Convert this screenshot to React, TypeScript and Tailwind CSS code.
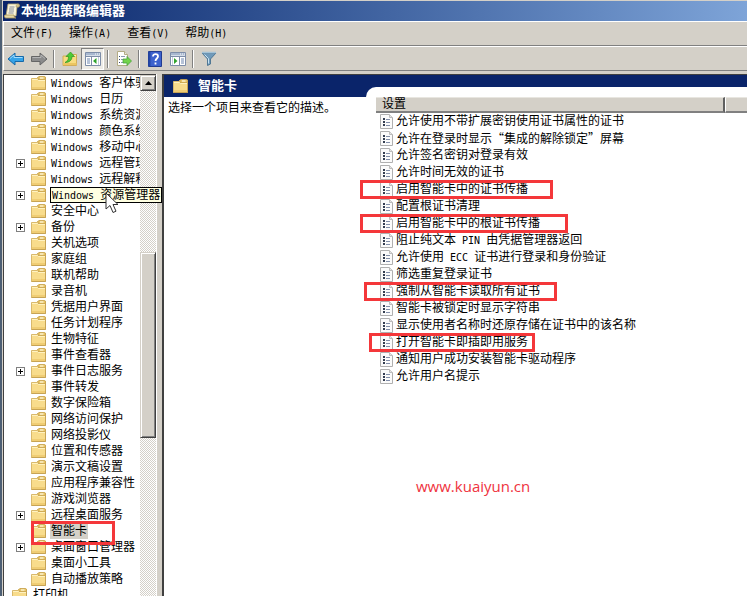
import React from 'react';

type TreeItem = {
  label: string;
  expandable?: boolean;
  selected?: boolean;
  tooltip?: boolean;
};

type Setting = {
  label: string;
  box?: string;
};

const menus = ['文件(F)', '操作(A)', '查看(V)', '帮助(H)'];

const treeItems: TreeItem[] = [
  { label: 'Windows 客户体验改善计划' },
  { label: 'Windows 日历' },
  { label: 'Windows 系统资源管理器' },
  { label: 'Windows 颜色系统' },
  { label: 'Windows 移动中心' },
  { label: 'Windows 远程管理', expandable: true },
  { label: 'Windows 远程解释' },
  { label: 'Windows 资源管理器', expandable: true, tooltip: true },
  { label: '安全中心' },
  { label: '备份', expandable: true },
  { label: '关机选项' },
  { label: '家庭组' },
  { label: '联机帮助' },
  { label: '录音机' },
  { label: '凭据用户界面' },
  { label: '任务计划程序' },
  { label: '生物特征' },
  { label: '事件查看器' },
  { label: '事件日志服务', expandable: true },
  { label: '事件转发' },
  { label: '数字保险箱' },
  { label: '网络访问保护' },
  { label: '网络投影仪' },
  { label: '位置和传感器' },
  { label: '演示文稿设置' },
  { label: '应用程序兼容性' },
  { label: '游戏浏览器' },
  { label: '远程桌面服务', expandable: true },
  { label: '智能卡', selected: true },
  { label: '桌面窗口管理器', expandable: true },
  { label: '桌面小工具' },
  { label: '自动播放策略' },
];

const settings: Setting[] = [
  { label: '允许使用不带扩展密钥使用证书属性的证书' },
  { label: '允许在登录时显示“集成的解除锁定”屏幕' },
  { label: '允许签名密钥对登录有效' },
  { label: '允许时间无效的证书' },
  { label: '启用智能卡中的证书传播', box: '-left-4 w-[193px]' },
  { label: '配置根证书清理' },
  { label: '启用智能卡中的根证书传播', box: '-left-4 w-52' },
  { label: '阻止纯文本 PIN 由凭据管理器返回' },
  { label: '允许使用 ECC 证书进行登录和身份验证' },
  { label: '筛选重复登录证书' },
  { label: '强制从智能卡读取所有证书', box: '-left-3 w-[193px]' },
  { label: '智能卡被锁定时显示字符串' },
  { label: '显示使用者名称时还原存储在证书中的该名称' },
  { label: '打开智能卡即插即用服务', box: '-left-[7px] w-[166px]' },
  { label: '通知用户成功安装智能卡驱动程序' },
  { label: '允许用户名提示' },
];

// Latin runs are set smaller so that one letter is half as wide as one Chinese character
const MixedText = ({ text }: { text: string }) => (
  <>
    {text.split(/([ -~]+)/).map((part, index) =>
      /^[ -~]+$/.test(part) ? (
        <span key={index} className="text-[10px] whitespace-pre font-['DejaVu_Sans_Mono',monospace]">{part}</span>
      ) : (
        <span key={index} className={part.includes('“') ? "font-['Noto_Sans_CJK_SC',sans-serif]" : ''}>{part}</span>
      )
    )}
  </>
);

const FolderIcon = () => (
  <svg viewBox="0 0 15 14" className="w-[15px] h-[14px] shrink-0" aria-hidden="true">
    <path d="M.5 2.500h5.500l1-1.500h7.500v12.500H.5z" fill="#f8dc8c" stroke="#d9b96c" strokeWidth="1" />
    <path d="M7 3.500V1.500l1-1h5.500l1 1v2z" fill="#e9c565" stroke="#c29c48" strokeWidth=".7" />
    <path d="M9 2h3.500" stroke="#fffbe6" strokeWidth="1.200" />
    <path d="M1 3.500h5.500l1 1H14" fill="none" stroke="#fff2c0" strokeWidth="1" />
    <path d="M1 11h13v2.500H1z" fill="#f0cd74" />
    <path d="M.5 13.500h14V4" fill="none" stroke="#c7a455" strokeWidth="1" />
  </svg>
);

const SettingIcon = () => (
  <svg viewBox="0 0 13 15" className="w-[13px] h-[15px] shrink-0" aria-hidden="true">
    <path d="M.5.5h9l3 3v11H.5z" fill="#fbfbfb" stroke="#b0b0b0" />
    <path d="M9.5.5v3h3" fill="#e4e4e4" stroke="#bdbdbd" />
    <path d="M3 4h2v2H3zM3 7h2v2H3zM3 10h2v2H3z" fill="#333d50" />
    <path d="M6 5.500h4M6 8.500h4M6 11.500h4" stroke="#8390ab" />
  </svg>
);

const ScrollIcon = () => (
  <svg viewBox="0 0 16 16" className="size-4 shrink-0" aria-hidden="true">
    <path d="M4 1h10c2 0 2 3 0 3h-1l-1 9H2L4 1z" fill="#fbf5d8" stroke="#b8a876" strokeWidth=".8" />
    <path d="M12 4c0-2 1-3 2-3s2 3 0 3z" fill="#d8c890" stroke="#a8965c" strokeWidth=".6" />
    <path d="M1 12h9c0 2 1 3 2 3H2c-2 0-2-3-1-3z" fill="#e6d9a6" stroke="#a8965c" strokeWidth=".8" />
    <path d="M5.500 4h5M5 6h5M5 8h5M4.500 10h5" stroke="#77819a" strokeWidth=".9" />
  </svg>
);

const BackIcon = () => (
  <svg viewBox="0 0 18 14" className="w-[18px] h-[14px]" aria-hidden="true">
    <path d="M1 7l7-6v3.500h8.500v5H8V13z" fill="#35a3e8" stroke="#1769a9" strokeLinejoin="round" />
    <path d="M3 6.500l4-3.500v2.500h8.500" fill="none" stroke="#9fdcff" />
  </svg>
);

const ForwardIcon = () => (
  <svg viewBox="0 0 18 14" className="w-[18px] h-[14px]" aria-hidden="true">
    <path d="M17 7l-7-6v3.500H1.500v5H10V13z" fill="#8b8b8b" stroke="#666" strokeLinejoin="round" />
    <path d="M2.500 5.500H11V3l4 3.500" fill="none" stroke="#b5b5b5" />
  </svg>
);

const UpFolderIcon = () => (
  <svg viewBox="0 0 16 16" className="size-4" aria-hidden="true">
    <path d="M1 5h5l1-1.500h7.500V14.500H1z" fill="#f8dc80" stroke="#cfa850" strokeWidth=".9" />
    <path d="M10 4.500h4" stroke="#fff3bd" />
    <path d="M1.500 13h13" stroke="#ecc661" strokeWidth="2" />
    <path d="M3 11.500c3-1.500 3.500-3.500 3.500-6H4L8.500 1l4 4.500H10c0 4-3 6-7 6z" fill="#4dcb35" stroke="#2f9323" strokeWidth=".7" />
  </svg>
);

const TreePaneIcon = () => (
  <svg viewBox="0 0 16 14" className="w-4 h-[14px]" aria-hidden="true">
    <path d="M.5.5h15v13H.5z" fill="#fff" stroke="#7d8da8" />
    <path d="M1 1h14v2.500H1z" fill="#a8b8d0" />
    <path d="M10 2h1M12 2h1M14 2h1" stroke="#fff" />
    <path d="M1 4.500h14M6.500 5v8.500" stroke="#7d8da8" />
    <path d="M2 7h3M2 9h3M2 11h3" stroke="#6d86b0" />
    <path d="M11.500 6v6L8 9z" fill="#2fa32c" />
    <path d="M13.500 5v8" stroke="#c4cedd" />
  </svg>
);

const ExportIcon = () => (
  <svg viewBox="0 0 16 16" className="size-4" aria-hidden="true">
    <path d="M1.500.5h7l3 3v11h-10z" fill="#fff" stroke="#b3ab84" />
    <path d="M8.500.5v3h3" fill="#e8e8de" stroke="#b3ab84" />
    <path d="M3 5.500h1M3 8.500h1M3 11.500h1" stroke="#394b70" />
    <path d="M5 5.500h4M5 8.500h3M5 11.500h3" stroke="#8c99b1" />
    <path d="M7 8h4V5.500L15.500 10 11 14.500V12H7z" fill="#73d34b" stroke="#4aa33c" strokeWidth=".8" />
  </svg>
);

const HelpIcon = () => (
  <svg viewBox="0 0 14 16" className="w-[14px] h-4" aria-hidden="true">
    <path d="M.5.500h13v15H.5z" fill="#3d62cd" stroke="#223c91" />
    <path d="M1.500 1v14" stroke="#2346a8" strokeWidth="2" />
    <path d="M5 5.500c0-3.500 5-3 5-.2C10 7.500 7.500 7.500 7.500 10M7.500 11.500v2" fill="none" stroke="#fff" strokeWidth="1.800" />
  </svg>
);

const ActionPaneIcon = () => (
  <svg viewBox="0 0 16 14" className="w-4 h-[14px]" aria-hidden="true">
    <path d="M.5.5h15v13H.5z" fill="#fff" stroke="#7d8da8" />
    <path d="M1 1h14v2.500H1z" fill="#a8b8d0" />
    <path d="M10 2h1M12 2h1M14 2h1" stroke="#fff" />
    <path d="M1 4.500h14M9.500 5v8.500" stroke="#7d8da8" />
    <path d="M11 7h3M11 9h3M11 11h3" stroke="#6d86b0" />
    <path d="M4 6v6l3.500-3z" fill="#2fa32c" />
    <path d="M2.500 5v8" stroke="#c4cedd" />
  </svg>
);

const FilterIcon = () => (
  <svg viewBox="0 0 16 15" className="w-4 h-[15px]" aria-hidden="true">
    <path d="M1 2h14L9.500 8v5l-3 1.500V8z" fill="#6f9abb" stroke="#48718f" strokeWidth=".9" />
    <path d="M3.500 3.500l4 4v5" fill="none" stroke="#c9e3f3" />
    <path d="M1 1.500h14" stroke="#a3c2d7" strokeWidth="1.500" />
  </svg>
);

const CursorIcon = () => (
  <svg viewBox="0 0 14 22" className="absolute left-[54px] top-1 z-20 w-[14px] h-[22px]" aria-hidden="true">
    <path d="M1 1v16l4-3.500 3 7 3-1.300-3-6.700h5z" fill="#fff" stroke="#333" />
  </svg>
);

const Separator = () => <div className="w-[2px] h-[18px] mx-[3px] border-l border-[#808080] bg-white" />;

const ToolButton = ({ label, pressed, children }: { label: string; pressed?: boolean; children: React.ReactNode }) => (
  <button
    aria-label={label}
    className={`flex items-center justify-center w-[23px] h-[22px] ${pressed ? 'border border-[#808080] border-r-white border-b-white bg-[#edebe6]' : ''}`}
  >
    {children}
  </button>
);

const TreeRow = ({ item }: { item: TreeItem }) => (
  <li className="relative flex items-center h-4 pl-3 whitespace-nowrap">
    {item.expandable ? (
      <button aria-label="+" className="flex items-center justify-center size-[9px] mr-[6px] shrink-0 border border-[#808080] bg-white">
        <svg viewBox="0 0 5 5" className="size-[5px]" aria-hidden="true">
          <path d="M0 2.500h5M2.500 0v5" stroke="#000" />
        </svg>
      </button>
    ) : (
      <span className="w-[9px] mr-[6px] shrink-0" />
    )}
    <FolderIcon />
    {item.tooltip ? (
      <div className="absolute left-[46px] top-0 z-10 h-4 px-px border border-black bg-[#ffffe1] leading-[14px]">
        <MixedText text={item.label} />
        <CursorIcon />
      </div>
    ) : (
      <span className={`min-w-0 overflow-hidden ml-1 px-px leading-4 ${item.selected ? 'bg-[#d4d0c8]' : ''}`}>
        <MixedText text={item.label} />
      </span>
    )}
    {item.selected && <div className="absolute left-[27px] -top-[2px] z-10 w-[84px] h-6 border-3 border-[#f4373a]" />}
  </li>
);

const TreePane = () => (
  <nav className="flex w-[137px] shrink-0 border-t border-l border-[#404040] bg-white">
    <ul className="flex-1 min-w-0">
      {treeItems.map((item) => (
        <TreeRow key={item.label} item={item} />
      ))}
      <li className="flex items-center h-4 pl-2 gap-[6px]">
        <FolderIcon />
        打印机
      </li>
    </ul>
  </nav>
);

const ScrollBar = () => (
  <div className="flex flex-col w-4 shrink-0 border-t border-[#404040] bg-[repeating-conic-gradient(#d4d0c8_0_25%,#fff_0_50%)] bg-[length:2px_2px]">
    <button aria-label="▲" className="flex items-center justify-center h-4 shrink-0 border border-[#d4d0c8] border-r-[#404040] border-b-[#404040] bg-[#d4d0c8] shadow-[inset_1px_1px_#fff,inset_-1px_-1px_#808080]">
      <svg viewBox="0 0 7 4" className="w-[7px] h-1" aria-hidden="true">
        <path d="M3.500 0L7 4H0z" fill="#000" />
      </svg>
    </button>
    <div className="basis-[161px] shrink-0" />
    <div className="basis-[186px] shrink-0 border border-[#d4d0c8] border-r-[#404040] border-b-[#404040] bg-[#d4d0c8] shadow-[inset_1px_1px_#fff,inset_-1px_-1px_#808080]" />
  </div>
);

const SettingsTable = () => (
  <table className="w-full border-separate border-spacing-0 text-left">
    <thead>
      <tr className="bg-[#d4d0c8]">
        <th className="h-4 p-0 pl-[6px] font-normal leading-[13px] border-t border-t-[#e8e6e0] border-b-2 border-b-[#808080] border-r-2 border-r-[#606060]">设置</th>
        <th className="w-[22px] p-0 border-t border-t-[#e8e6e0] border-b-2 border-b-[#808080] border-l border-l-white" aria-label="状态" />
      </tr>
    </thead>
    <tbody>
      {settings.map((setting) => (
        <tr key={setting.label}>
          <td className="p-0" colSpan={2}>
            <div className="relative flex items-center gap-[3px] h-[17px] pl-1 leading-[17px] whitespace-nowrap">
              <SettingIcon />
              <span><MixedText text={setting.label} /></span>
              {setting.box && <div className={`absolute -top-px z-10 h-[19px] border-3 border-[#f4373a] ${setting.box}`} />}
            </div>
          </td>
        </tr>
      ))}
    </tbody>
  </table>
);

const DetailPane = () => (
  <main className="flex flex-col flex-1 min-w-0 border-t border-l-2 border-[#404040] bg-white">
    <div className="flex flex-1 bg-[linear-gradient(#0a246a_22px,#fff_22px)]">
      <section className="w-[202px] shrink-0">
        <header className="flex items-center gap-[10px] h-[22px] pl-[9px] text-white">
          <FolderIcon />
          <h2 className="text-[13px] leading-[22px] font-bold">智能卡</h2>
        </header>
        <p className="px-1 pt-[2px] leading-[18px]">选择一个项目来查看它的描述。</p>
      </section>
      <section className="flex flex-col flex-1 min-w-0 mt-3 pl-[10px] pt-[10px] rounded-tl-[10px] bg-white">
        <SettingsTable />
        <p className="mt-[91px] ml-10 text-[15px] leading-5 text-[#ef3340] font-['Open_Sans',sans-serif]">www.kuaiyun.cn</p>
      </section>
    </div>
  </main>
);

export default function App() {
  return (
    <div className="flex flex-col h-screen overflow-hidden border-l-2 border-[#4d5f74] bg-[#d4d0c8] text-black text-xs font-['Liberation_Sans','Noto_Sans_CJK_SC',sans-serif]">
      <header className="flex items-center gap-px h-[21px] shrink-0 pl-px border-t border-l border-[#d4d0c8] bg-linear-to-r from-[#0a246a] to-[#7ea4d8] text-white">
        <ScrollIcon />
        <h1 className="text-[13px] leading-5 font-bold">本地组策略编辑器</h1>
      </header>
      <nav className="flex items-center gap-4 h-[25px] shrink-0 pl-[7px] ml-px border-t border-l border-white border-b border-b-[#808080]">
        {menus.map((menu) => (
          <button key={menu} className="flex items-baseline leading-5">
            <MixedText text={menu} />
          </button>
        ))}
      </nav>
      <div className="flex items-center h-[25px] shrink-0 ml-px border-t border-l border-white border-b border-b-[#808080]">
        <ToolButton label="后退"><BackIcon /></ToolButton>
        <ToolButton label="前进"><ForwardIcon /></ToolButton>
        <Separator />
        <ToolButton label="向上"><UpFolderIcon /></ToolButton>
        <ToolButton label="显示控制台树" pressed><TreePaneIcon /></ToolButton>
        <Separator />
        <ToolButton label="导出列表"><ExportIcon /></ToolButton>
        <Separator />
        <ToolButton label="帮助"><HelpIcon /></ToolButton>
        <ToolButton label="显示操作窗格"><ActionPaneIcon /></ToolButton>
        <Separator />
        <ToolButton label="筛选器"><FilterIcon /></ToolButton>
      </div>
      <div className="flex flex-1 min-h-0 pl-px pt-[3px]">
        <TreePane />
        <ScrollBar />
        <div className="w-[6px] shrink-0 border-l border-white" />
        <DetailPane />
      </div>
    </div>
  );
}
